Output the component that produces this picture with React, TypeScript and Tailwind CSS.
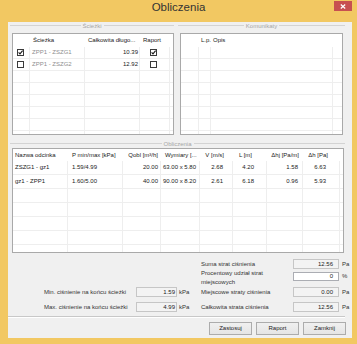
import React from "react";

function Check({ checked }: { checked?: boolean }) {
  return (
    <svg width="7" height="7" viewBox="0 0 7 7" className="block">
      <rect x="0.5" y="0.5" width="6" height="6" fill="#fff" stroke="#3a3a3a" />
      {checked && (
        <path d="M1.6 3.3 L3 4.8 L5.6 1.7" fill="none" stroke="#1a1a1a" strokeWidth="1.1" />
      )}
    </svg>
  );
}

function GroupTitle({ title }: { title: string }) {
  return (
    <div className="h-[7px] flex items-center">
      <div className="flex-1 h-px bg-[#d3d3d3]" />
      <span className="px-[2px] text-[6px] leading-none text-[#a6a6a6]">{title}</span>
      <div className="flex-1 h-px bg-[#d3d3d3]" />
    </div>
  );
}

function Box({ value, white, w, pr }: { value: string; white?: boolean; w: string; pr: string }) {
  return (
    <div
      className={`${w} h-[10px] border ${
        white ? "bg-white border-[#abadb3]" : "bg-[#f3f3f3] border-[#c6c6c6]"
      } text-right ${pr} leading-[8px] text-[#222]`}
    >
      {value}
    </div>
  );
}

const emptyRows = [0, 1, 2, 3, 4, 5, 6, 7];

const cols3 = [
  { w: "w-[55px]", h: "pl-[2px]", v: "pl-[2px]" },
  { w: "w-[55px]", h: "pl-[4px]", v: "pl-[4px]" },
  { w: "w-[38px]", h: "pr-[3px] text-right", v: "pr-[2px] text-right" },
  { w: "w-[39px]", h: "pl-[4px]", v: "pl-[2px]" },
  { w: "w-[33px]", h: "pr-[9px] text-right", v: "pr-[9px] text-right" },
  { w: "w-[34px]", h: "pr-[15px] text-right", v: "pr-[12px] text-right" },
  { w: "w-[36px]", h: "pr-[4px] text-right", v: "pr-[4px] text-right" },
  { w: "w-[37px]", h: "pr-[12px] text-right", v: "pr-[13px] text-right" },
];

const head3 = [
  "Nazwa odcinka",
  "P min/max [kPa]",
  "Qobl [m³/h]",
  "Wymiary [...",
  "V [m/s]",
  "L [m]",
  "Δhj [Pa/m]",
  "Δh [Pa]",
];

const rows3 = [
  ["ZSZG1 - gz1", "1.59/4.99", "20.00", "63.00 x 5.80", "2.68", "4.20", "1.58", "6.63"],
  ["gz1 - ZPP1", "1.60/5.00", "40.00", "90.00 x 8.20", "2.61", "6.18", "0.96", "5.93"],
  ["", "", "", "", "", "", "", ""],
  ["", "", "", "", "", "", "", ""],
  ["", "", "", "", "", "", "", ""],
  ["", "", "", "", "", "", "", ""],
  ["", "", "", "", "", "", "", ""],
];

const paths = [
  { on: true, name: "ZPP1 - ZSZG1", len: "10.39", rep: true },
  { on: false, name: "ZPP1 - ZSZG2", len: "12.92", rep: false },
];

export default function App() {
  return (
    <div className="w-[357px] h-[344px] bg-[#f2c862] flex flex-col font-['Liberation_Sans',Arial,sans-serif] text-[6px] text-[#2a2a2a] overflow-hidden">
      {/* title bar */}
      <div className="relative h-[22px] shrink-0 flex items-start justify-center pt-[2px]">
        <span className="text-[11.5px] leading-none text-[#333]">Obliczenia</span>
        <div className="absolute right-[5px] top-[1px] w-[18px] h-[10px] bg-[#c75050] flex items-center justify-center">
          <svg width="6" height="5" viewBox="0 0 6 5">
            <path d="M0.8 0.5 L5.2 4.5 M5.2 0.5 L0.8 4.5" stroke="#fff" strokeWidth="1.2" />
          </svg>
        </div>
      </div>

      {/* client area */}
      <div className="ml-[8px] mr-[5px] h-[316px] bg-[#f0f0f0] flex flex-col">
        {/* top groups */}
        <div className="flex pl-[2px]">
          <div className="w-[164px] flex flex-col">
            <GroupTitle title="Ścieżki" />
            <div className="mt-[4px] ml-[2px] w-[162px] h-[102px] border border-[#a9a9a9] bg-white overflow-hidden">
              <div className="flex h-[13px] leading-[13px] text-[#222]">
                <div className="w-[17px]" />
                <div className="w-[55px] pl-[3px] whitespace-nowrap">Ścieżka</div>
                <div className="w-[55px] pl-[3px] whitespace-nowrap">Całkowita długo...</div>
                <div className="w-[30px] pl-[3px]">Raport</div>
              </div>
              {paths.map((p) => (
                <div key={p.name} className="flex h-[12px] border-b border-[#eeeeee]">
                  <div className="w-[17px] pl-[4px] flex items-center border-r border-[#eeeeee]">
                    <Check checked={p.on} />
                  </div>
                  <div className="w-[55px] pl-[2px] leading-[11px] text-[#8e8e8e] whitespace-nowrap border-r border-[#eeeeee]">
                    {p.name}
                  </div>
                  <div className="w-[55px] pr-[1px] text-right leading-[11px] text-[#222] border-r border-[#eeeeee]">
                    {p.len}
                  </div>
                  <div className="w-[30px] pl-[10px] flex items-center border-r border-[#eeeeee]">
                    <Check checked={p.rep} />
                  </div>
                </div>
              ))}
              {emptyRows.map((i) => (
                <div key={i} className="flex h-[12px] border-b border-[#eeeeee]">
                  <div className="w-[17px] border-r border-[#eeeeee]" />
                  <div className="w-[55px] border-r border-[#eeeeee]" />
                  <div className="w-[55px] border-r border-[#eeeeee]" />
                  <div className="w-[30px] border-r border-[#eeeeee]" />
                </div>
              ))}
            </div>
          </div>

          <div className="ml-[4px] w-[167px] flex flex-col">
            <GroupTitle title="Komunikaty" />
            <div className="mt-[4px] ml-[2px] w-[163px] h-[102px] border border-[#a9a9a9] bg-white overflow-hidden">
              <div className="flex h-[13px] leading-[13px] text-[#222]">
                <div className="w-[20px]" />
                <span>L.p.</span>
                <span className="ml-[2px]">Opis</span>
              </div>
              {emptyRows.concat([8, 9]).map((i) => (
                <div key={i} className="flex h-[12px] border-b border-[#eeeeee]">
                  <div className="w-[18px] border-r border-[#eeeeee]" />
                  <div className="w-[12px] border-r border-[#eeeeee]" />
                  <div className="w-[122px] border-r border-[#eeeeee]" />
                </div>
              ))}
            </div>
          </div>
        </div>

        {/* Obliczenia group */}
        <div className="mt-[5px] ml-[2px] w-[335px] flex flex-col">
          <GroupTitle title="Obliczenia" />
          <div className="mt-[1px] ml-[2px] w-[332px] h-[105px] border border-[#a9a9a9] bg-white overflow-hidden">
            <div className="flex h-[12px] leading-[12px] text-[#222]">
              {cols3.map((c, i) => (
                <div key={i} className={`${c.w} ${c.h} whitespace-nowrap overflow-hidden`}>
                  {head3[i]}
                </div>
              ))}
            </div>
            {rows3.map((r, ri) => (
              <div key={ri} className="flex h-[14px] leading-[13px] border-b border-[#eeeeee] text-[#222]">
                {cols3.map((c, i) => (
                  <div key={i} className={`${c.w} ${c.v} whitespace-nowrap overflow-hidden border-r border-[#eeeeee]`}>
                    {r[i]}
                  </div>
                ))}
              </div>
            ))}
          </div>
        </div>

        {/* bottom fields */}
        <div className="mt-[6px] flex h-[10px]">
          <div className="w-[193px]" />
          <div className="w-[92px] leading-[10px] text-[#333]">Suma strat ciśnienia</div>
          <Box value="12.56" w="w-[46px]" pr="pr-[5px]" />
          <span className="ml-[3px] leading-[10px] text-[#333]">Pa</span>
        </div>
        <div className="flex h-[18px]">
          <div className="w-[193px]" />
          <div className="w-[92px] leading-[9px] text-[#333]">
            Procentowy udział strat
            <br />
            miejscowych
          </div>
          <div className="mt-[3px] w-[46px] h-[9px] bg-white border border-[#abadb3] text-right pr-[5px] leading-[7px] text-[#222]">
            0
          </div>
          <span className="ml-[3px] mt-[3px] leading-[9px] text-[#333]">%</span>
        </div>
        <div className="flex h-[10px]">
          <div className="w-[193px] pl-[36px] flex">
            <div className="w-[92px] leading-[10px] text-[#333] whitespace-nowrap">Min. ciśnienie na końcu ścieżki</div>
            <Box value="1.59" w="w-[41px]" pr="pr-[1px]" />
            <span className="ml-[2px] leading-[10px] text-[#333]">kPa</span>
          </div>
          <div className="w-[92px] leading-[10px] text-[#333] whitespace-nowrap">Miejscowe straty ciśnienia</div>
          <Box value="0.00" w="w-[46px]" pr="pr-[5px]" />
          <span className="ml-[3px] leading-[10px] text-[#333]">Pa</span>
        </div>
        <div className="mt-[5px] flex h-[10px]">
          <div className="w-[193px] pl-[36px] flex">
            <div className="w-[92px] leading-[10px] text-[#333] whitespace-nowrap">Max. ciśnienie na końcu ścieżki</div>
            <Box value="4.99" w="w-[41px]" pr="pr-[1px]" />
            <span className="ml-[2px] leading-[10px] text-[#333]">kPa</span>
          </div>
          <div className="w-[92px] leading-[10px] text-[#333] whitespace-nowrap">Całkowita strata ciśnienia</div>
          <Box value="12.56" w="w-[46px]" pr="pr-[5px]" />
          <span className="ml-[3px] leading-[10px] text-[#333]">Pa</span>
        </div>

        {/* separator */}
        <div className="mt-[4px] mr-[7px] h-px bg-[#c8c8c8]" />
        <div className="mr-[7px] h-px bg-white" />

        {/* buttons */}
        <div className="mt-[4px] flex justify-end gap-[4px] pr-[6px]">
          {["Zastosuj", "Raport", "Zamknij"].map((b) => (
            <div
              key={b}
              className="w-[43px] h-[13px] border border-[#acacac] bg-gradient-to-b from-[#f0f0f0] to-[#e5e5e5] flex items-center justify-center text-[#222]"
            >
              {b}
            </div>
          ))}
        </div>
      </div>
    </div>
  );
}
